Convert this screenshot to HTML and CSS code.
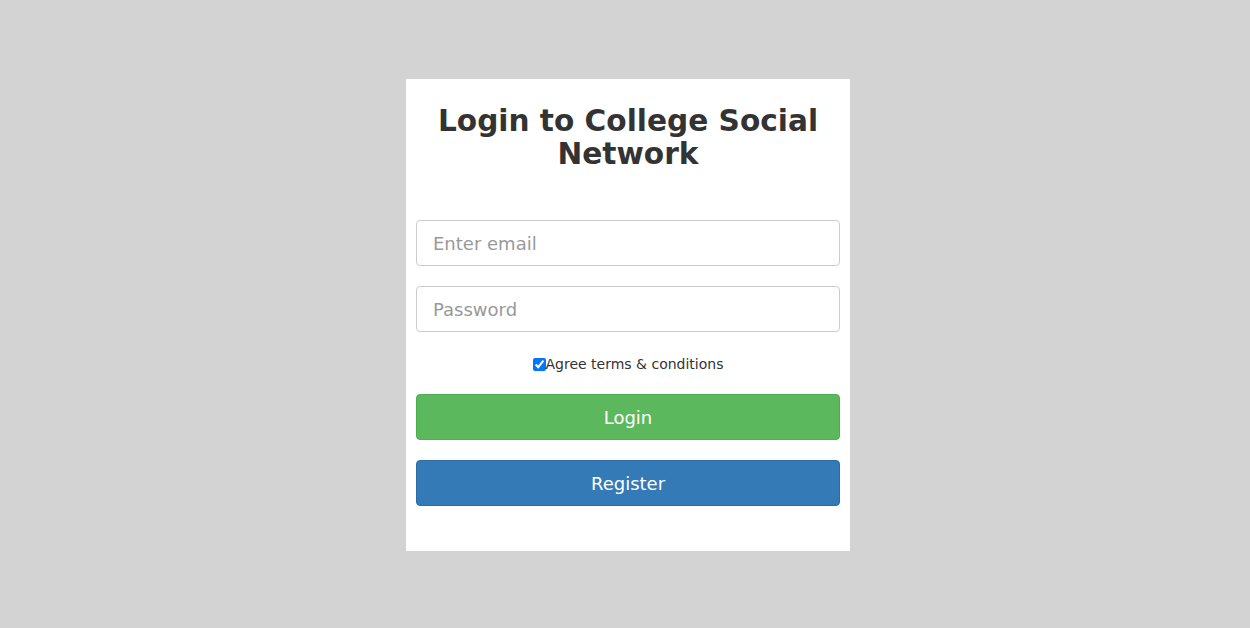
FILE: index.html
```html
<!DOCTYPE html>
<html>
<head>
<meta charset="utf-8">
<link rel="stylesheet" href="styles.css">
</head>
<body>
<div class="page">
  <div class="card">
    <h2 class="title">Login to College Social Network</h2>
    <form class="form">
      <input class="field" type="email" placeholder="Enter email">
      <input class="field" type="password" placeholder="Password">
      <label class="agree"><input class="check" type="checkbox" checked>Agree terms &amp; conditions</label>
      <button class="btn btn-login" type="button">Login</button>
      <button class="btn btn-register" type="button">Register</button>
    </form>
  </div>
</div>
</body>
</html>
```
FILE: styles.css
```css
* { box-sizing: border-box; }
html, body { margin: 0; height: 100%; }
body {
  background: #d3d3d3;
  font-family: "DejaVu Sans", Verdana, sans-serif;
  color: #333;
}
.page {
  height: 100%;
  display: flex;
  align-items: center;
  justify-content: center;
  padding-left: 6px;
  padding-top: 2px;
}
.card {
  width: 444px;
  height: 472px;
  background: #fff;
  padding: 10px;
}
.title {
  font-size: 29.6px;
  line-height: 33px;
  font-weight: bold;
  text-align: center;
  margin: 16px 0 49px;
  color: #333;
}
.form {
  display: flex;
  flex-direction: column;
}
.field {
  height: 46px;
  width: 100%;
  border: 1px solid #ccc;
  border-radius: 4px;
  padding: 10px 16px;
  font-family: inherit;
  font-size: 18px;
  color: #555;
  margin: 0 0 20px;
  outline: none;
}
.field::placeholder { color: #999; }
.agree {
  display: flex;
  justify-content: center;
  align-items: center;
  height: 20px;
  font-size: 14px;
  line-height: 20px;
  margin: 2px 0 20px;
}
.check {
  margin: 0;
  width: 13px;
  height: 13px;
}
.btn {
  height: 46px;
  width: 100%;
  border-radius: 4px;
  font-family: inherit;
  font-size: 18px;
  color: #fff;
  margin: 0 0 20px;
  padding: 10px 16px;
}
.btn-login { background: #5cb85c; border: 1px solid #4cae4c; }
.btn-register { background: #337ab7; border: 1px solid #2e6da4; }
```
